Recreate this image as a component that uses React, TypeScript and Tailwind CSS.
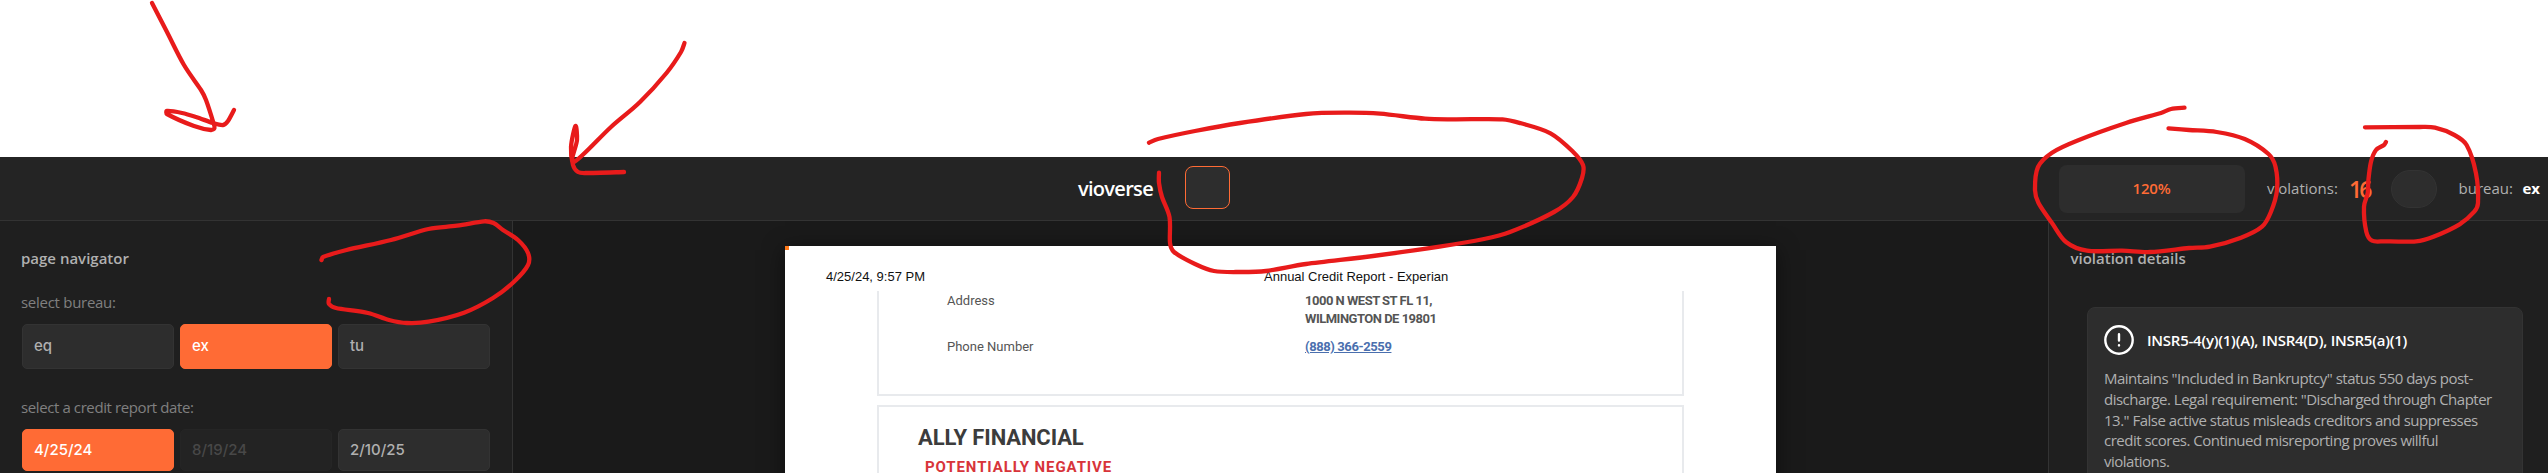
type Point = [number, number];

const strokes: Point[][] = [
  [[152,3],[167,32],[184,65],[201,90],[206,100],[213.5,123],[214.5,128],[211,130],[194,126],[167,114],[167,111],[182,113],[196,117],[213,123],[223,125],[228,121],[234,110]],
  [[684.5,43],[681,52],[666.5,73],[640,102],[611,127],[574,162],[577,140],[575.5,126],[571,147],[573,165],[578,172],[586.5,173],[624,172]],
  [[321.5,260],[323,257],[346.5,250],[391,240],[428.5,229],[457,225.7],[484,221.3],[493.5,223],[503,230],[518,240],[528,253],[528,265],[514,281.7],[493,298],[464,312.7],[428.6,321.7],[407,323],[389,320],[368,313],[336,308],[329,304],[329,299]],
  [[1149,142.7],[1158,139],[1195,131],[1240,123],[1306,114],[1347,112.7],[1380,113.7],[1425,118.7],[1454,119.3],[1502.5,119.3],[1521,123.3],[1550.5,133.3],[1573,151.7],[1583,165],[1582,178],[1573,197],[1554,212],[1510,232],[1484,239],[1439.5,246.7],[1373,256],[1306,264],[1266,271],[1240,272],[1214,271],[1195,264],[1174,252],[1170,243],[1169.5,217],[1162,197],[1159,183],[1159,172.7]],
  [[2184.5,107.7],[2171,109],[2161,113],[2126,123],[2077,140.7],[2052,152.7],[2038,167],[2035,190],[2038.5,203],[2052,223],[2066,242],[2087,250.7],[2122,250.7],[2150,252],[2189,248],[2210,246.7],[2241,237.7],[2262,226.7],[2271,211.7],[2277,190],[2275.5,166.7],[2268.5,154],[2244.7,139],[2216.7,132],[2189,130],[2168.5,128.3]],
  [[2386,142],[2384,145],[2376,150],[2371,161.7],[2368.4,180],[2367.7,193],[2364,206.7],[2366.3,231.7],[2372,240.7],[2384.5,241.3],[2416,241.3],[2433.4,236.7],[2459.6,224.3],[2474.3,211.7],[2478,203],[2476,173.3],[2466.6,145],[2454.4,135],[2435,127.7],[2419.4,127],[2365,127.3]],
];

// Smooths a pen stroke by running a Catmull-Rom curve through its points.
function toPath(points: Point[]) {
  let d = `M${points[0][0]} ${points[0][1]}`;
  for (let i = 0; i < points.length - 1; i++) {
    const p0 = points[Math.max(i - 1, 0)];
    const p1 = points[i];
    const p2 = points[i + 1];
    const p3 = points[Math.min(i + 2, points.length - 1)];
    // Handles are capped by the segment length, so short segments next to long ones do not loop.
    const len = Math.hypot(p2[0] - p1[0], p2[1] - p1[1]);
    const handle = (a: Point, b: Point): Point => {
      const dx = b[0] - a[0];
      const dy = b[1] - a[1];
      const k = Math.min(1 / 6, len / 3 / (Math.hypot(dx, dy) || 1));
      return [dx * k, dy * k];
    };
    const h1 = handle(p0, p2);
    const h2 = handle(p1, p3);
    d += ` C${p1[0] + h1[0]} ${p1[1] + h1[1]} ${p2[0] - h2[0]} ${p2[1] - h2[1]} ${p2[0]} ${p2[1]}`;
  }
  return d;
}

function Annotations() {
  return (
    <svg className="pointer-events-none absolute inset-0" width="2548" height="473" fill="none" stroke="#e81b1b" strokeWidth="4.3" strokeLinecap="round" strokeLinejoin="round">
      {strokes.map((s, i) => (
        <path key={i} d={toPath(s)} />
      ))}
    </svg>
  );
}

const variants = {
  normal: "border-[#333333] bg-[#2d2d2d] text-[#b0b0b0]",
  active: "border-[#ff6b35] bg-[#ff6b35] text-white",
  disabled: "border-[#252525] bg-[#232323] text-[#484848]",
};

function Choice({ label, variant = "normal", size }: { label: string; variant?: keyof typeof variants; size: string }) {
  return (
    <button className={`flex w-[152px] items-center rounded-[5px] border pl-[11px] text-left font-['Inter'] text-[15px] font-medium ${size} ${variants[variant]}`}>
      {label}
    </button>
  );
}

function Header() {
  return (
    <header className="flex h-[64px] shrink-0 items-center border-b border-[#333333] bg-[#242424]">
      <div className="ml-[1078px] w-[107px] text-[20px] font-semibold leading-[24px] tracking-[-0.7px] text-white">vioverse</div>
      <div className="-mt-[2px] h-[43px] w-[45px] rounded-lg border border-[#ff6b35] bg-[#2d2d2d]" />
      <div className="ml-[829px] flex h-[48px] w-[186px] items-center justify-center rounded-lg bg-[#2d2d2d] pr-px text-[15px] font-semibold tracking-[-0.2px] text-[#ff6b35]">120%</div>
      <div className="ml-[22px] w-[82px] text-[15px] text-[#b0b0b0]">violations:</div>
      <div className="w-[42px] text-[23px] font-semibold leading-[24px] tracking-[-3px] text-[#ff6b35]">16</div>
      <div className="h-[38px] w-[46px] rounded-[20px] border border-[#333333] bg-[#2d2d2d]" />
      <div className="ml-[21.5px] w-[64px] text-[15px] text-[#b0b0b0]">bureau:</div>
      <div className="text-[15px] font-bold text-white">ex</div>
    </header>
  );
}

function Navigator() {
  return (
    <aside className="w-[513px] shrink-0 border-r border-[#333333] bg-[#1f1f1f] pl-[22px] pt-[27px]">
      <h2 className="-ml-px text-[15px] font-semibold leading-[20px] text-[#b0b0b0]">page navigator</h2>
      <p className="-ml-px mt-6 text-[15px] leading-[20px] tracking-[-0.28px] text-[#808080]">select bureau:</p>
      <div className="mt-3 flex gap-[6px]">
        <Choice label="eq" size="h-[45px]" />
        <Choice label="ex" variant="active" size="h-[45px]" />
        <Choice label="tu" size="h-[45px]" />
      </div>
      <p className="-ml-px mt-7 text-[15px] leading-[20px] tracking-[-0.4px] text-[#808080]">select a credit report date:</p>
      <div className="mt-3 flex gap-[6px]">
        <Choice label="4/25/24" variant="active" size="h-[42px]" />
        <Choice label="8/19/24" variant="disabled" size="h-[42px]" />
        <Choice label="2/10/25" size="h-[42px]" />
      </div>
    </aside>
  );
}

function Report() {
  return (
    <main className="flex-1 overflow-hidden bg-[#1a1a1a] pl-[272px] pt-[25px]">
      <article className="h-[400px] w-[991px] bg-white shadow-[0_4px_20px_rgba(0,0,0,0.5)]">
        <div className="h-1 w-1 bg-[#ff7a1a]" />
        <div className="flex pl-[41px] pt-[18px] font-['Liberation_Sans'] text-[13px] leading-[18px] text-[#111]">
          <span className="w-[438px]">4/25/24, 9:57 PM</span>
          <span>Annual Credit Report - Experian</span>
        </div>
        <section className="ml-[92px] mt-[5px] h-[105px] w-[807px] border-2 border-t-0 border-[#e8eaed] pl-[68px] pt-px font-['Roboto'] text-[13px] leading-[18px] text-[#555]">
          <div className="flex">
            <span className="w-[358px]">Address</span>
            <span className="font-bold tracking-[-0.5px]">1000 N WEST ST FL 11,<br />WILMINGTON DE 19801</span>
          </div>
          <div className="mt-[10px] flex">
            <span className="w-[358px]">Phone Number</span>
            <span className="font-bold tracking-[-0.4px] text-[#4a6fae] underline">(888) 366-2559</span>
          </div>
        </section>
        <section className="ml-[92px] mt-[9px] h-[200px] w-[807px] border-2 border-[#e8eaed] pl-[39px] pt-[18px] font-['Roboto'] font-bold">
          <h1 className="text-[22px] leading-[26px] tracking-[-0.1px] text-[#3c3c3c]">ALLY FINANCIAL</h1>
          <p className="ml-[7px] mt-[6px] text-[15px] leading-[20px] tracking-[0.9px] text-[#d8343a]">POTENTIALLY NEGATIVE</p>
        </section>
      </article>
    </main>
  );
}

function Details() {
  return (
    <aside className="w-[500px] shrink-0 border-l border-[#333333] bg-[#1f1f1f] pt-[27px]">
      <h2 className="ml-[21.5px] text-[15px] font-semibold leading-[20px] text-[#b0b0b0]">violation details</h2>
      <div className="ml-[38px] mt-[39px] h-[300px] w-[436px] rounded-lg border border-[#333333] bg-[#2d2d2d] pl-4 pt-[17px]">
        <div className="flex h-[30px] items-center gap-[13px]">
          <svg width="30" height="30" viewBox="0 0 30 30" fill="none" stroke="white" strokeWidth="2.4" strokeLinecap="round">
            <circle cx="15" cy="15" r="13.7" />
            <path d="M15 9.2v6.3M15 20.2v.2" />
          </svg>
          <h3 className="text-[15px] font-semibold tracking-[-0.24px] text-white">INSR5-4(y)(1)(A), INSR4(D), INSR5(a)(1)</h3>
        </div>
        <p className="mt-[13px] whitespace-nowrap text-[15px] leading-[20.8px] tracking-[-0.5px] text-[#b0b0b0]">
          Maintains "Included in Bankruptcy" status 550 days post-<br />
          discharge. Legal requirement: "Discharged through Chapter<br />
          13." False active status misleads creditors and suppresses<br />
          credit scores. Continued misreporting proves willful<br />
          violations.
        </p>
      </div>
    </aside>
  );
}

export default function App() {
  return (
    <div className="relative flex h-[473px] w-[2548px] flex-col overflow-hidden bg-white pt-[157px] font-['Open_Sans','Noto_Sans',sans-serif]">
      <Header />
      <div className="flex min-h-0 flex-1 overflow-hidden">
        <Navigator />
        <Report />
        <Details />
      </div>
      <Annotations />
    </div>
  );
}
